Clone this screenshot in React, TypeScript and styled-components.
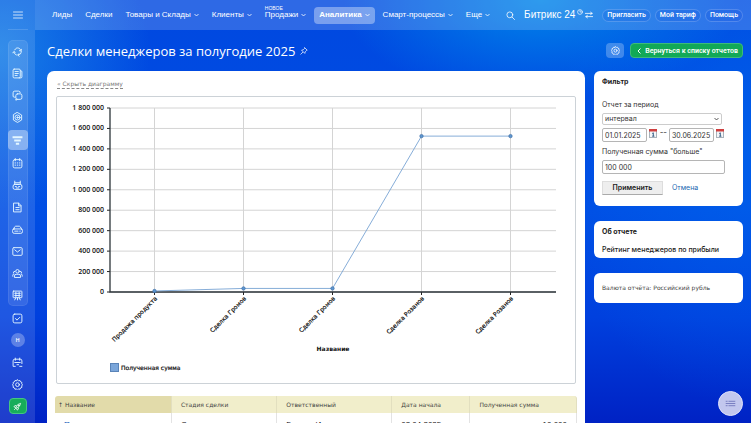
import React from 'react';
import styled, { createGlobalStyle, css } from 'styled-components';

const Global = createGlobalStyle`
  *, *::before, *::after { box-sizing: border-box; }
  html, body, #root { height: 100%; }
  body {
    margin: 0;
    overflow: hidden;
    font-family: Inter, "Liberation Sans", sans-serif;
    font-size: 8px;
    line-height: 12px;
    color: #333;
  }
  button, input, select { font: inherit; color: inherit; margin: 0; }
  h1, h2, p { margin: 0; }
  a { color: inherit; text-decoration: none; }
`;

const Page = styled.div`
  display: flex;
  height: 100%;
  overflow: hidden;
  background:
    radial-gradient(ellipse 200px 100px at 72% 0%, rgba(0, 148, 236, 0.8), transparent),
    radial-gradient(ellipse 150px 160px at 0% 12%, rgba(30, 140, 232, 0.8), transparent),
    radial-gradient(ellipse 200px 260px at 100% 35%, rgba(0, 110, 240, 0.5), transparent),
    linear-gradient(180deg, #0048e0 0%, #004ee4 50%, #0040de 75%, #0022c4 100%);
`;

const Sidebar = styled.nav`
  flex: none;
  width: 35px;
  display: flex;
  flex-direction: column;
  align-items: center;
  background: rgba(255, 255, 255, 0.12);
`;

const Burger = styled.button`
  display: grid;
  place-items: center;
  width: 20px;
  height: 30px;
  padding: 0;
  border: 0;
  border-bottom: 1px solid rgba(255, 255, 255, 0.15);
  background: none;
  color: #fff;
`;

const Group = styled.div<{ $framed?: boolean }>`
  display: flex;
  flex-direction: column;
  align-items: center;
  gap: 2px;
  ${p => p.$framed ? css`
    margin-top: 10px;
    padding: 1px 0;
    border-radius: 5px;
    background: rgba(255, 255, 255, 0.1);
    box-shadow: inset 0 0 0 1px rgba(255, 255, 255, 0.08);
  ` : css`margin-top: 2px;`}
`;

const SideItem = styled.button<{ $active?: boolean }>`
  display: grid;
  place-items: center;
  width: 20px;
  height: 20px;
  padding: 0;
  border: 0;
  border-radius: 4px;
  color: #e4f6ff;
  background: ${p => (p.$active ? 'rgba(255, 255, 255, 0.38)' : 'none')};
  margin-block: ${p => (p.$active ? '1px' : '0')};
`;

const Avatar = styled.span`
  display: grid;
  place-items: center;
  width: 14px;
  height: 14px;
  border-radius: 50%;
  background: rgba(255, 255, 255, 0.28);
  color: #fff;
  font-size: 5px;
  font-weight: 600;
`;

const Rocket = styled.span`
  display: grid;
  place-items: center;
  width: 18px;
  height: 16px;
  border-radius: 4px;
  border: 1px solid #45c682;
  background: #17ad5a;
  color: #fff;
`;

const Main = styled.div`
  flex: 1;
  min-width: 0;
  display: flex;
  flex-direction: column;
`;

const Header = styled.header`
  flex: none;
  display: flex;
  align-items: center;
  height: 30px;
  padding: 0 8px 0 12px;
  background: rgba(255, 255, 255, 0.18);
  color: #fff;
  font-family: "Liberation Sans", sans-serif;
  white-space: nowrap;
`;

const Menu = styled.nav`
  display: flex;
  align-items: center;
`;

const MenuLink = styled.a<{ $active?: boolean }>`
  position: relative;
  display: flex;
  align-items: center;
  gap: 3px;
  height: 17px;
  padding: 0 5px;
  margin-right: 3px;
  border-radius: 4px;
  background: ${p => (p.$active ? 'rgba(255, 255, 255, 0.36)' : 'none')};
  font-weight: ${p => (p.$active ? 700 : 400)};
`;

const NewTag = styled.sup`
  position: absolute;
  left: 5px;
  top: -2px;
  font-size: 5px;
  line-height: 6px;
`;

const HeaderTools = styled.div`
  display: flex;
  align-items: center;
  margin-left: auto;
  gap: 4px;
`;

const IconButton = styled.button`
  display: grid;
  place-items: center;
  padding: 0;
  border: 0;
  background: none;
  color: #fff;
`;

const Brand = styled.a`
  display: flex;
  align-items: center;
  gap: 2px;
  margin: 0 5px;
  font-size: 10px;
`;

const Clock = styled.span`
  align-self: flex-start;
  display: flex;
`;

const Pill = styled.button`
  height: 13px;
  padding: 0 4px;
  border: 1px solid rgba(255, 255, 255, 0.2);
  border-radius: 7px;
  background: rgba(0, 70, 220, 0.15);
  color: #fff;
  font-family: Roboto, sans-serif;
  font-size: 7px;
  line-height: 11px;
  font-weight: 500;
`;

const TitleBar = styled.div`
  flex: none;
  display: flex;
  align-items: center;
  height: 41px;
  padding: 0 8px 0 12px;
  color: #fff;
`;

const Title = styled.h1`
  font-family: "Open Sans", sans-serif;
  font-size: 13px;
  line-height: 18px;
  font-weight: 500;
  margin-right: 5px;
`;

const Settings = styled.button`
  display: grid;
  place-items: center;
  width: 18px;
  height: 15px;
  margin: 0 6px 0 auto;
  padding: 0;
  border: 0;
  border-radius: 4px;
  background: rgba(255, 255, 255, 0.25);
  color: #fff;
`;

const BackLink = styled.a`
  display: flex;
  align-items: center;
  gap: 4px;
  height: 15px;
  padding: 0 4px 0 6px;
  border: 1px solid #3dbb79;
  border-radius: 4px;
  background: #12a957;
  font-family: Roboto, sans-serif;
  font-size: 7px;
  font-weight: 600;
`;

const Content = styled.div`
  flex: 1;
  min-height: 0;
  display: flex;
  gap: 9px;
  padding: 0 8px 0 12px;
`;

const Report = styled.main`
  flex: 1;
  min-width: 0;
  padding: 9px 8px 0;
  border-radius: 7px 7px 0 0;
  background: #fff;
  overflow: hidden;
`;

const Toggle = styled.button`
  display: block;
  margin: 0 2px 7px;
  padding: 0;
  border: 0;
  border-bottom: 1px dashed #888;
  background: none;
  color: #777;
  font: 6px/8px "DejaVu Sans", sans-serif;
`;

const ChartBox = styled.figure`
  margin: 0 1px 12px;
  border: 1px solid #ccd2d7;
  border-radius: 2px;

  svg { display: block; width: 100%; height: auto; }
`;

const Table = styled.table`
  width: 100%;
  table-layout: fixed;
  border-spacing: 0;
  font: 6px/9px "DejaVu Sans", sans-serif;
  text-align: left;
`;

const Th = styled.th<{ $sorted?: boolean }>`
  height: 17px;
  padding: 0 9px;
  font-weight: 400;
  color: #444;
  white-space: nowrap;
  background: ${p => (p.$sorted ? '#e2dbaa' : '#f1eecb')};
  border-right: 1px solid #e2dfbf;
  padding-left: ${p => (p.$sorted ? '3px' : '9px')};

  &:first-child { border-top-left-radius: 3px; }
  &:last-child { border-top-right-radius: 3px; }
`;

const Td = styled.td<{ $right?: boolean }>`
  padding: 6px 9px;
  border-right: 1px solid #e3e3e3;
  line-height: 11px;
  font-size: 8px;
  font-family: "Liberation Sans", sans-serif;
  color: #111;
  text-align: ${p => (p.$right ? 'right' : 'left')};

  a { color: #1058b8; }
`;

const Aside = styled.aside`
  flex: none;
  width: 149px;
  display: flex;
  flex-direction: column;
  gap: 15px;
`;

const Card = styled.section`
  padding: 6px 8px 3px;
  border-radius: 6px;
  background: #fff;
`;

const CardTitle = styled.h2`
  font-size: 7px;
  line-height: 10px;
  font-weight: 700;
  color: #222;
`;

const Form = styled.form`
  display: flex;
  flex-direction: column;
  align-items: flex-start;
  padding: 13px 0 8px;
`;

const Label = styled.label`
  font-size: 7px;
  line-height: 10px;
  margin-bottom: 3px;
`;

const fieldLook = css`
  border: 1px solid #b5b5b5;
  border-radius: 2px;
  background: #fff;
  color: #333;
  font: 7px/10px Inter, sans-serif;
`;

const SelectWrap = styled.div`
  display: grid;
  align-items: center;
  width: 120px;

  > * { grid-area: 1 / 1; }
  > svg { justify-self: end; margin-right: 3px; pointer-events: none; }
`;

const Select = styled.select`
  ${fieldLook}
  appearance: none;
  width: 100%;
  height: 12px;
  padding: 0 2px;
  line-height: 10px;
  border-color: #ccc;
`;

const DateRow = styled.div`
  display: flex;
  align-items: flex-start;
  gap: 2px;
  margin: 3px 0 5px;

  > svg { margin-top: 1px; }
`;

const Input = styled.input<{ $wide?: boolean }>`
  ${fieldLook}
  width: ${p => (p.$wide ? '123px' : '45px')};
  height: 14px;
  padding: 0 2px;
`;

const Dash = styled.span`
  width: 8px;
  text-align: right;
  line-height: 9px;
`;

const Actions = styled.div`
  display: flex;
  align-items: center;
  gap: 9px;
  margin-top: 7px;
`;

const Apply = styled.button`
  width: 61px;
  height: 14px;
  padding: 0;
  border: 1px solid #ddd;
  border-bottom-color: #aaa;
  background: #eee;
  font-size: 7px;
  line-height: 10px;
  font-weight: 600;
  color: #222;
`;

const Cancel = styled.a`
  color: #2067b0;
  font-size: 7px;
`;

const AboutText = styled.p`
  margin-top: 8px;
  font-size: 7px;
  font-weight: 500;
  line-height: 10px;
  color: #222;
`;

const Currency = styled.p`
  padding: 4px 0 7px;
  font: 6px/10px "DejaVu Sans", sans-serif;
  color: #444;
`;

const Fab = styled.button`
  position: fixed;
  right: 8px;
  bottom: 7px;
  display: grid;
  place-items: center;
  width: 25px;
  height: 25px;
  padding: 0;
  border: 1px solid #dfe1fb;
  border-radius: 50%;
  background: #c2c7ee;
  color: #6b71b8;
`;

type IconProps = { size?: number; stroke?: number; children: React.ReactNode };
const Icon = ({ size = 11, stroke = 1.7, children }: IconProps) => (
  <svg width={size} height={size} viewBox="0 0 20 20" fill="none" stroke="currentColor"
    strokeWidth={stroke} strokeLinecap="round" strokeLinejoin="round" aria-hidden="true">
    {children}
  </svg>
);

const Chevron = () => (
  <svg width="5" height="4" viewBox="0 0 5 4" fill="none" stroke="currentColor" strokeWidth="0.8" aria-hidden="true">
    <path d="M0.5 1 L2.5 3 L4.5 1" />
  </svg>
);

const gear = (
  <>
    <path d="M10 1.5l2 1.7 2.6-.4 1 2.4 2.4 1-.4 2.6 1.6 1.8-1.6 2 .4 2.6-2.4 1-1 2.4-2.6-.4-2 1.6-2-1.6-2.6.4-1-2.4-2.4-1 .4-2.6-1.6-2 1.6-1.8-.4-2.6 2.4-1 1-2.4 2.6.4z" />
    <circle cx="10" cy="10.3" r="3.4" />
  </>
);
const people = (
  <>
    <circle cx="10" cy="6" r="3.2" />
    <path d="M4.5 16.500v-2q0-3 3-3h5q3 0 3 3v2z M5 6q-3 0-2.500 3 M15 6q3 0 2.500 3 M1.500 15v-2q0-2 2-2 M18.500 15v-2q0-2-2-2" />
  </>
);

const framed = [
  { name: 'Процессы', icon: <><path d="M5 7q2-3.500 5-3.500 4 0 5.500 3.500M17 10q-.500 5.500-6 6.500M8 16.300Q4 15 3.500 11" strokeDasharray="4 1.500" /><path d="M13.500 8.500l3 .500.500-3M12.500 14l-2 2.500 2.500 2M1.500 12.500L3.500 10l2.500 2" /></> },
  { name: 'Новости', icon: <><rect x="2" y="2" width="13" height="16" rx="2" /><path d="M15 5h1q2 0 2 2v9q0 2-2 2h-3M5.500 6.500h6M5.500 10h6M5.500 13.500h4" /></> },
  { name: 'Чаты', icon: <><path d="M6 13H4q-2 0-2-2V5q0-3 3-3h7q3 0 3 3" /><rect x="7" y="7" width="11" height="10" rx="3" /><path d="M7 17v1.500l3-1.500" /></> },
  { name: 'Цели', icon: <><path d="M10 1l7.500 4.500v9L10 19l-7.500-4.500v-9z" /><circle cx="10" cy="10" r="4.600" /><circle cx="10" cy="10" r="1.200" fill="currentColor" /></> },
  { name: 'CRM', active: true, icon: <path d="M1 4h18M4 10h12M7 16h6" strokeWidth="3.600" strokeLinecap="butt" /> },
  { name: 'Календарь', icon: <><rect x="2" y="3" width="16" height="15" rx="3" /><path d="M6 1v4M14 1v4" /><path d="M5.500 9h9M5.500 13h9" strokeDasharray="1 3" /></> },
  { name: 'Роботы', icon: <><path d="M5 8V5h10v3M5 2v3M15 2v3M8 8h4" /><rect x="2" y="8" width="16" height="9" rx="3" /><path d="M6 12h2M12 12h2M8 14.500h4" /></> },
  { name: 'Документы', icon: <><path d="M3.500 2H12l4.500 4.500V18h-13zM12 2v5h4" /><path d="M7 10h6M7 14h6" /></> },
  { name: 'Диск', icon: <><path d="M2 10l3-5q1-1 2-1h6q1 0 2 1l3 5" /><rect x="1" y="9" width="18" height="8" rx="3" /><path d="M5 13h6M14 13h1" /></> },
  { name: 'Почта', icon: <><rect x="1.500" y="3" width="17" height="14" rx="2" /><path d="M5 7l5 4 5-4" /></> },
  { name: 'Группы', icon: people },
  { name: 'Магазин', icon: <><rect x="2" y="2" width="16" height="12" rx="1" /><path d="M5 6h10M5 10h10M7 4v8M13 4v8M10 14v4M5 18l2-4M15 18l-2-4" /></> },
];

const menu = [
  { text: 'Лиды' },
  { text: 'Сделки' },
  { text: 'Товары и Склады', more: true },
  { text: 'Клиенты', more: true },
  { text: 'Продажи', more: true, isNew: true },
  { text: 'Аналитика', more: true, active: true },
  { text: 'Смарт-процессы', more: true },
  { text: 'Еще', more: true },
];

const points = [
  { name: 'Продажа продукта', value: 10000 },
  { name: 'Сделка Громов', value: 35000 },
  { name: 'Сделка Громов', value: 35000 },
  { name: 'Сделка Розанов', value: 1525000 },
  { name: 'Сделка Розанов', value: 1525000 },
];

const ChartText = styled.text<{ $tick?: boolean; $bold?: boolean }>`
  font-family: ${p => (p.$tick ? '"Open Sans"' : '"DejaVu Sans"')}, sans-serif;
  font-size: ${p => (p.$tick ? '7px' : '6px')};
  font-weight: ${p => (p.$tick ? 600 : p.$bold ? 700 : 400)};
  fill: #111;
`;

const Chart = () => {
  const left = 53, top = 11, right = 499, bottom = 195, max = 1800000;
  const y = (v: number) => bottom - (v / max) * (bottom - top);
  const x = (i: number) => left + 44.5 + i * 89;
  const ticks = Array.from({ length: 10 }, (_, i) => i * 200000);
  return (
    <svg viewBox="0 0 518 286" role="img" aria-label="Полученная сумма">
      {ticks.map(t => (
        <g key={t}>
          <line x1={left} x2={right} y1={y(t)} y2={y(t)} stroke="#d4d4d4" strokeWidth="1" />
          <line x1={left - 3} x2={left} y1={y(t)} y2={y(t)} stroke="#222" />
          <ChartText $tick x={left - 6} y={y(t) + 2} textAnchor="end">
            {String(t).replace(/\B(?=(\d{3})+$)/g, ' ')}
          </ChartText>
        </g>
      ))}
      {points.map((p, i) => (
        <g key={i}>
          <line x1={x(i)} x2={x(i)} y1={top} y2={bottom} stroke="#d4d4d4" />
          <line x1={x(i)} x2={x(i)} y1={bottom} y2={bottom + 3} stroke="#222" />
          <ChartText transform={`translate(${x(i) + 3} ${bottom + 7}) rotate(-45)`} textAnchor="end" stroke="#111" strokeWidth="0.2">
            {p.name}
          </ChartText>
        </g>
      ))}
      <path d={`M${left} ${top}V${bottom}H${right}`} fill="none" stroke="#2b3338" strokeWidth="1.3" />
      <polyline points={points.map((p, i) => `${x(i)},${y(p.value)}`).join(' ')} fill="none" stroke="#78a4d4" strokeWidth="0.9" />
      {points.map((p, i) => (
        <circle key={i} cx={x(i)} cy={y(p.value)} r="1.700" fill="#5e97d0" stroke="#3d6ea8" strokeWidth="0.7" />
      ))}
      <ChartText $bold x={276} y={254} textAnchor="middle">Название</ChartText>
      <rect x="53.500" y="266.500" width="8" height="8" fill="#7ba6da" stroke="#5a84b8" />
      <ChartText x="64" y="273" stroke="#111" strokeWidth="0.2">Полученная сумма</ChartText>
    </svg>
  );
};

const CalendarIcon = () => (
  <svg width="8" height="9" viewBox="0 0 8 9" aria-hidden="true">
    <rect x="0.500" y="0.500" width="7" height="8" fill="#f4f6f8" stroke="#a9b3bb" />
    <rect width="8" height="2.500" fill="#cf3f3f" />
    <path d="M3.200 4.500L4.300 3.800V7.200M3.200 7.200H5.400" fill="none" stroke="#24507c" strokeWidth="0.9" />
  </svg>
);

export default function App() {
  return (
    <>
      <Global />
      <Page>
        <Sidebar aria-label="Разделы">
          <Burger aria-label="Меню"><Icon size={10} stroke={1.5}><path d="M1 4h18M1 10h18M1 16h18" /></Icon></Burger>
          <Group $framed>
            {framed.map(it => (
              <SideItem key={it.name} $active={it.active} aria-label={it.name}><Icon>{it.icon}</Icon></SideItem>
            ))}
          </Group>
          <Group>
            <SideItem aria-label="Задачи"><Icon><rect x="2" y="2" width="16" height="16" rx="3" /><path d="M6.500 10l2.500 3 5-5" /></Icon></SideItem>
            <SideItem aria-label="Профиль"><Avatar>Н</Avatar></SideItem>
            <SideItem aria-label="Бронирование"><Icon><path d="M6 17H2V7q0-3 3-3h10q3 0 3 3v5M6 2v4M14 2v4M5 10h10M9 14h3M14 17h4" /></Icon></SideItem>
            <SideItem aria-label="Настройки"><Icon>{gear}</Icon></SideItem>
            <SideItem aria-label="Старт">
              <Rocket><Icon size={9}><path d="M7 11q2-7 10-8-1 8-8 10zM7 8H4l-2 3 4 1M12 13v3l-3 2-1-4M3 17l3-3" /><circle cx="12.500" cy="7.500" r="1" /></Icon></Rocket>
            </SideItem>
          </Group>
        </Sidebar>
        <Main>
          <Header>
            <Menu aria-label="CRM">
              {menu.map(m => (
                <MenuLink key={m.text} href="#" $active={m.active}>
                  {m.isNew && <NewTag>НОВОЕ</NewTag>}
                  {m.text}
                  {m.more && <Chevron />}
                </MenuLink>
              ))}
            </Menu>
            <HeaderTools>
              <IconButton aria-label="Поиск"><Icon size={9}><circle cx="8.500" cy="8.500" r="6.500" /><path d="M13.500 13.500L19 19" /></Icon></IconButton>
              <Brand href="#">
                Битрикс 24
                <Clock><Icon size={6} stroke={2.2}><circle cx="10" cy="10" r="8" /><path d="M10 5v5h4" /></Icon></Clock>
                <Icon size={8} stroke={2}><path d="M1 6h17M14 3l4 3-4 3M19 14H2M6 11l-4 3 4 3" /></Icon>
              </Brand>
              <Pill>Пригласить</Pill>
              <Pill>Мой тариф</Pill>
              <Pill>Помощь</Pill>
            </HeaderTools>
          </Header>
          <TitleBar>
            <Title>Сделки менеджеров за полугодие 2025</Title>
            <IconButton aria-label="Закрепить"><Icon size={8} stroke={1.8}><path d="M12 2l6 6-2 1-3 3-1 4-8-8 4-1 3-3zM7 13l-5 5" /></Icon></IconButton>
            <Settings aria-label="Настройки отчета"><Icon size={9}>{gear}</Icon></Settings>
            <BackLink href="#">
              <svg width="4" height="6" viewBox="0 0 4 6" fill="none" stroke="currentColor" aria-hidden="true"><path d="M3.500 0.500L1 3l2.500 2.500" /></svg>
              Вернуться к списку отчетов
            </BackLink>
          </TitleBar>
          <Content>
            <Report>
              <Toggle>« Скрыть диаграмму</Toggle>
              <ChartBox><Chart /></ChartBox>
              <Table>
                <colgroup><col width="22.400%" /><col width="20.200%" /><col width="22%" /><col width="15%" /><col /></colgroup>
                <thead>
                  <tr>
                    <Th $sorted>↑ Название</Th><Th>Стадия сделки</Th><Th>Ответственный</Th><Th>Дата начала</Th><Th>Полученная сумма</Th>
                  </tr>
                </thead>
                <tbody>
                  <tr><Td><a href="#">Продажа</a></Td><Td>Сделка</Td><Td>Громов Иван</Td><Td>03.04.2025</Td><Td $right>10 000</Td></tr>
                </tbody>
              </Table>
            </Report>
            <Aside>
              <Card>
                <CardTitle>Фильтр</CardTitle>
                <Form onSubmit={e => e.preventDefault()}>
                  <Label htmlFor="period">Отчет за период</Label>
                  <SelectWrap>
                    <Select id="period"><option>интервал</option></Select>
                    <Chevron />
                  </SelectWrap>
                  <DateRow>
                    <Input aria-label="Начало" defaultValue="01.01.2025" />
                    <CalendarIcon />
                    <Dash>--</Dash>
                    <Input aria-label="Конец" defaultValue="30.06.2025" />
                    <CalendarIcon />
                  </DateRow>
                  <Label htmlFor="sum">Полученная сумма "больше"</Label>
                  <Input id="sum" $wide defaultValue="100 000" />
                  <Actions>
                    <Apply type="submit">Применить</Apply>
                    <Cancel href="#">Отмена</Cancel>
                  </Actions>
                </Form>
              </Card>
              <Card>
                <CardTitle>Об отчете</CardTitle>
                <AboutText>Рейтинг менеджеров по прибыли</AboutText>
              </Card>
              <Card>
                <Currency>Валюта отчёта: Российский рубль</Currency>
              </Card>
            </Aside>
          </Content>
        </Main>
        <Fab aria-label="Список"><Icon size={11} stroke={1.5}><path d="M2 6h2M7 6h11M2 10h16M2 14h2M7 14h11" /></Icon></Fab>
      </Page>
    </>
  );
}
